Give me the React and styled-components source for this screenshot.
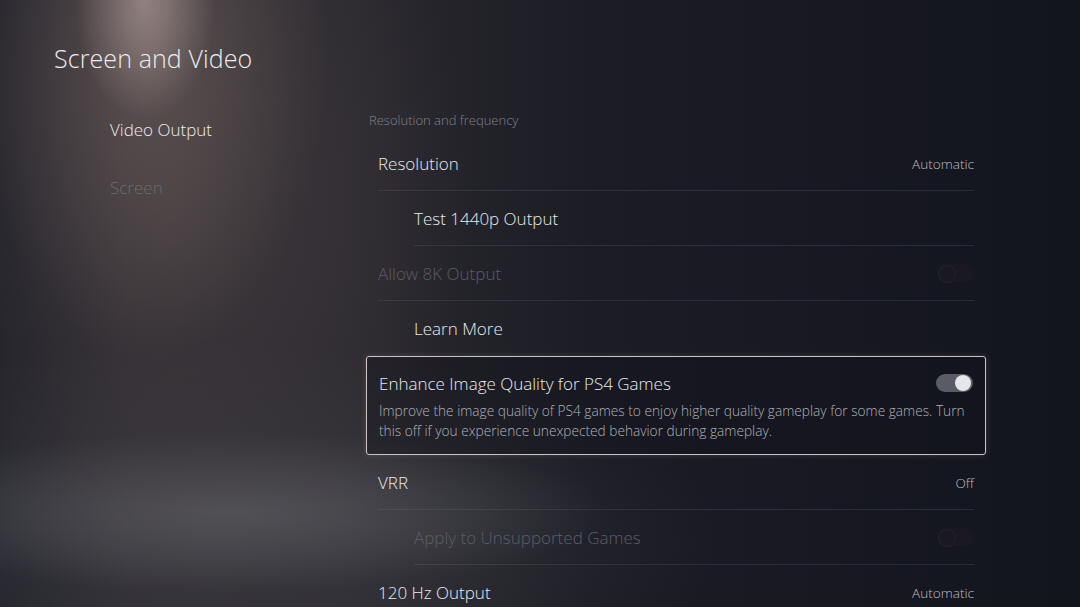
import React from "react";
import styled, { createGlobalStyle } from "styled-components";

const GlobalStyle = createGlobalStyle`
  html, body {
    margin: 0;
    padding: 0;
    background: #14161f;
  }
  * {
    box-sizing: border-box;
  }
`;

const Screen = styled.div`
  width: 1080px;
  height: 607px;
  overflow: hidden;
  display: flex;
  font-family: "Open Sans", "Noto Sans", sans-serif;
  color: #e4e4e6;
  background:
    radial-gradient(ellipse 70px 120px at 145px 0px, rgba(205, 185, 178, 0.5), transparent),
    radial-gradient(ellipse 180px 320px at 150px 40px, rgba(150, 128, 122, 0.38), transparent),
    radial-gradient(ellipse 300px 420px at 170px 200px, rgba(80, 70, 72, 0.55), transparent),
    radial-gradient(ellipse 380px 80px at 230px 512px, rgba(120, 122, 128, 0.42), transparent),
    radial-gradient(ellipse 520px 200px at 200px 540px, rgba(70, 70, 76, 0.5), transparent),
    linear-gradient(90deg, #1d1e27 0%, #2a282e 12%, #2b292f 32%, #1b1c25 55%, #13151e 100%);
`;

const Sidebar = styled.aside`
  width: 366px;
  flex-shrink: 0;
  padding: 41px 0 0 54px;
`;

const Title = styled.h1`
  margin: 0 0 43px;
  font-size: 25px;
  font-weight: 300;
  line-height: 34px;
  color: #ececee;
  letter-spacing: 0.1px;
`;

const Nav = styled.nav`
  display: flex;
  flex-direction: column;
  gap: 34px;
  padding-left: 56px;
`;

const NavItem = styled.div`
  font-size: 17px;
  line-height: 24px;
  font-weight: 300;
  color: ${(p) => (p.$active ? "#ececee" : "#6d6a6e")};
`;

const Main = styled.main`
  width: 620px;
  padding-top: 111px;
`;

const SectionLabel = styled.div`
  font-size: 13px;
  line-height: 18px;
  font-weight: 300;
  color: #80818a;
  padding-left: 3px;
  margin-bottom: 7px;
`;

const Row = styled.div`
  height: 55px;
  padding: 0 12px;
`;

const RowInner = styled.div`
  height: 100%;
  margin-left: ${(p) => (p.$indent ? "36px" : "0")};
  display: flex;
  align-items: center;
  justify-content: space-between;
  border-bottom: 1px solid
    ${(p) => (p.$divider ? "rgba(120, 124, 140, 0.2)" : "transparent")};
`;

const RowLabel = styled.span`
  font-size: 17px;
  font-weight: 300;
  color: ${(p) => (p.$disabled ? "#5b5d67" : "#eaeaec")};
`;

const RowValue = styled.span`
  font-size: 13.6px;
  font-weight: 300;
  color: #bdbec4;
`;

const FocusCard = styled.div`
  height: 99px;
  padding: 13px 12px 0;
  border: 1.5px solid #cdc3c4;
  border-radius: 3px;
  box-shadow: 0 0 6px rgba(255, 230, 225, 0.15);
  background: rgba(16, 17, 26, 0.35);
`;

const CardHead = styled.div`
  display: flex;
  align-items: center;
  justify-content: space-between;
  height: 26px;
  margin-bottom: 5px;
`;

const CardDesc = styled.p`
  margin: 0;
  max-width: 596px;
  font-size: 13.7px;
  font-weight: 300;
  line-height: 20px;
  color: #b0b1b8;
`;

const Toggle = styled.div`
  width: 37px;
  height: 18px;
  border-radius: 9px;
  position: relative;
  background: ${(p) => (p.$disabled ? "rgba(90, 50, 60, 0.08)" : "#5a5b66")};

  &::after {
    content: "";
    position: absolute;
    top: 1px;
    ${(p) => (p.$on ? "right: 2px;" : "left: 1px;")}
    width: 16px;
    height: 16px;
    border-radius: 50%;
    background: ${(p) => (p.$disabled ? "transparent" : "#e6e6ea")};
    border: ${(p) => (p.$disabled ? "1.5px solid rgba(110, 110, 125, 0.13)" : "none")};
  }
`;

const rows = [
  { label: "Resolution", value: "Automatic", divider: true },
  { label: "Test 1440p Output", indent: true, divider: true },
  { label: "Allow 8K Output", disabled: true, toggle: "off", divider: true },
  { label: "Learn More", indent: true },
];

const rowsAfter = [
  { label: "VRR", value: "Off", divider: true },
  { label: "Apply to Unsupported Games", indent: true, disabled: true, toggle: "off", divider: true },
  { label: "120 Hz Output", value: "Automatic" },
];

const SettingRow = ({ label, value, indent, disabled, toggle, divider }) => (
  <Row>
    <RowInner $indent={indent} $divider={divider}>
      <RowLabel $disabled={disabled}>{label}</RowLabel>
      {value && <RowValue>{value}</RowValue>}
      {toggle && <Toggle $disabled={disabled} $on={toggle === "on"} />}
    </RowInner>
  </Row>
);

const App = () => {
  return (
    <>
      <GlobalStyle />
      <Screen>
        <Sidebar>
          <Title>Screen and Video</Title>
          <Nav>
            <NavItem $active>Video Output</NavItem>
            <NavItem>Screen</NavItem>
          </Nav>
        </Sidebar>
        <Main>
          <SectionLabel>Resolution and frequency</SectionLabel>
          {rows.map((r) => (
            <SettingRow key={r.label} {...r} />
          ))}
          <FocusCard>
            <CardHead>
              <RowLabel>Enhance Image Quality for PS4 Games</RowLabel>
              <Toggle $on />
            </CardHead>
            <CardDesc>
              Improve the image quality of PS4 games to enjoy higher quality gameplay for some games. Turn
              this off if you experience unexpected behavior during gameplay.
            </CardDesc>
          </FocusCard>
          {rowsAfter.map((r) => (
            <SettingRow key={r.label} {...r} />
          ))}
        </Main>
      </Screen>
    </>
  );
};

export default App;
